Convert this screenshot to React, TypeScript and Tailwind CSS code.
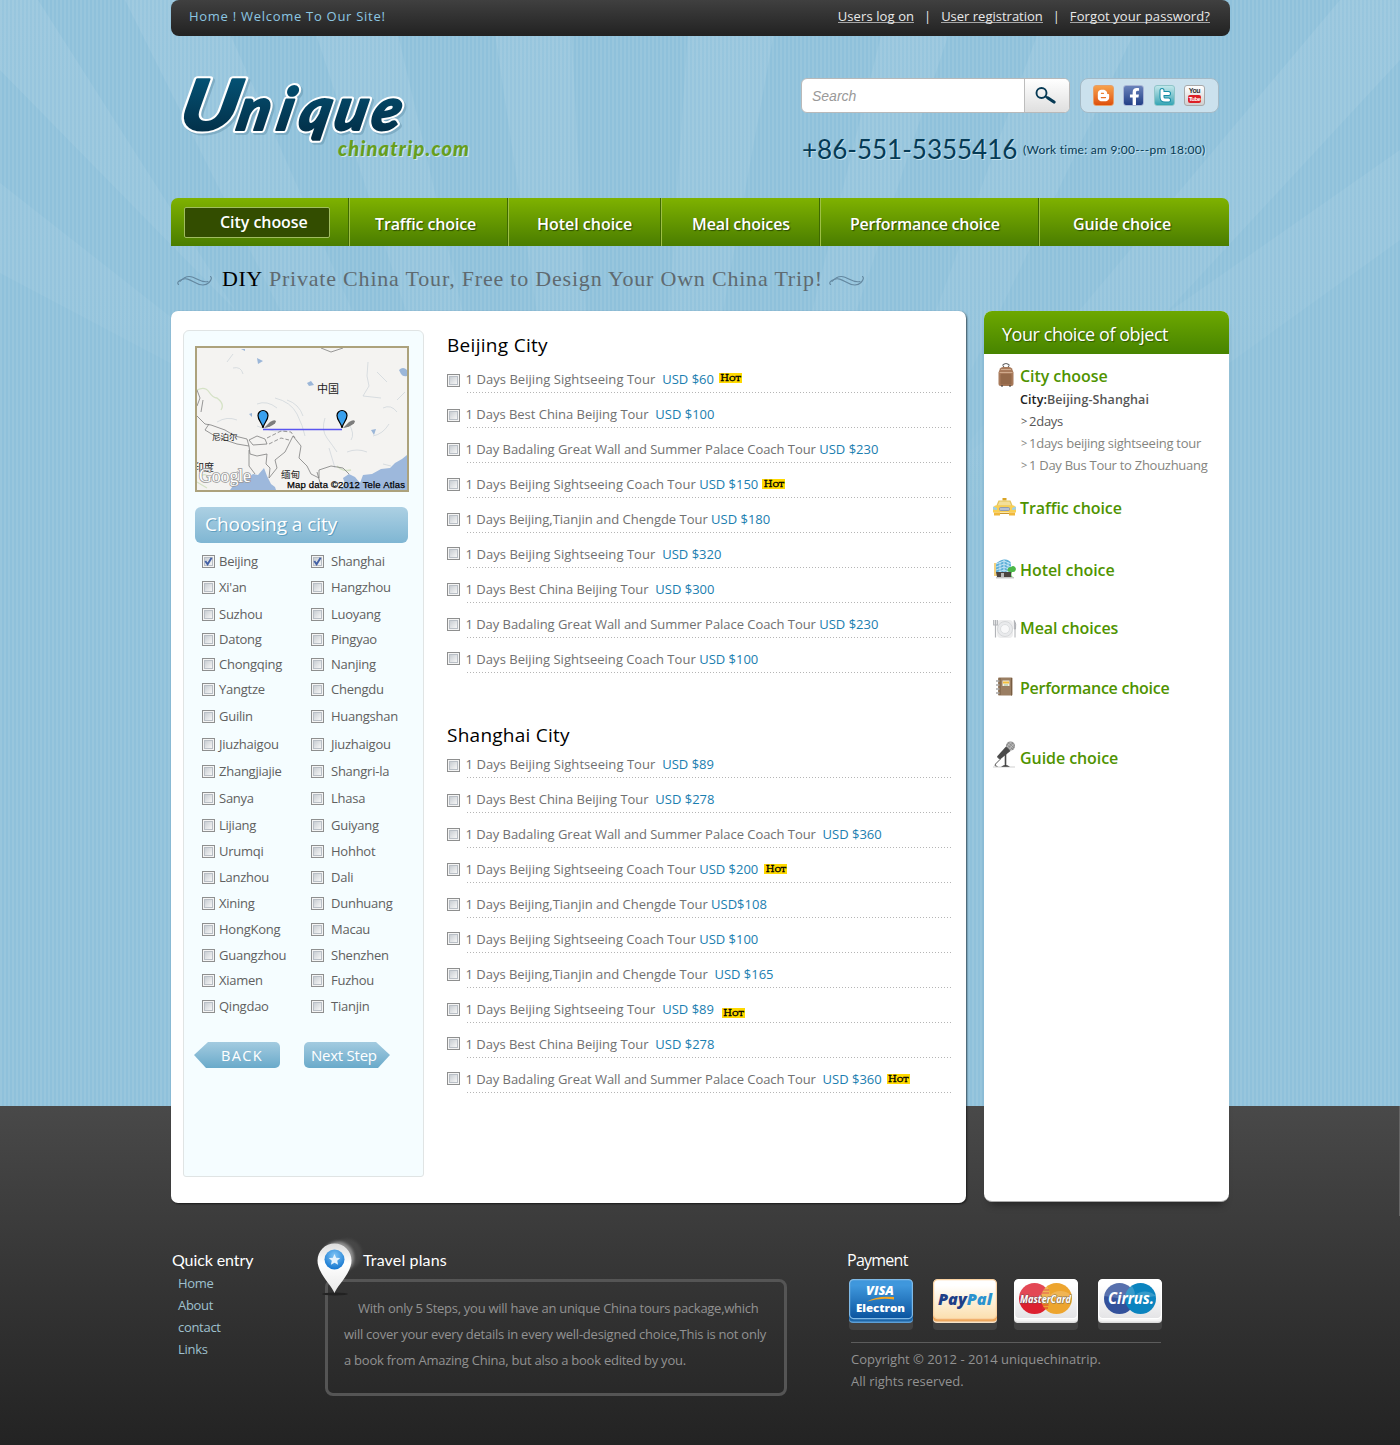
import type { ReactNode } from "react";
import { FaBloggerB, FaFacebookF } from "react-icons/fa";

/* ---------- data ---------- */

type Tour = { name: string; price: string; box: number; hot?: [number, number] };

const beijing: Tour[] = [
  { name: "1 Days Beijing Sightseeing Tour\u00a0\u00a0", price: "USD $60", box: 16, hot: [5, 15] },
  { name: "1 Days Best China Beijing Tour\u00a0\u00a0", price: "USD $100", box: 16 },
  { name: "1 Day Badaling Great Wall and Summer Palace Coach Tour\u00a0", price: "USD $230", box: 15 },
  { name: "1 Days Beijing Sightseeing Coach Tour\u00a0", price: "USD $150", box: 15, hot: [4, 16] },
  { name: "1 Days Beijing,Tianjin and Chengde Tour\u00a0", price: "USD $180", box: 15 },
  { name: "1 Days Beijing Sightseeing Tour\u00a0\u00a0", price: "USD $320", box: 14 },
  { name: "1 Days Best China Beijing Tour\u00a0\u00a0", price: "USD $300", box: 15 },
  { name: "1 Day Badaling Great Wall and Summer Palace Coach Tour\u00a0", price: "USD $230", box: 15 },
  { name: "1 Days Beijing Sightseeing Coach Tour\u00a0", price: "USD $100", box: 14 },
];

const shanghai: Tour[] = [
  { name: "1 Days Beijing Sightseeing Tour\u00a0\u00a0", price: "USD $89", box: 16 },
  { name: "1 Days Best China Beijing Tour\u00a0\u00a0", price: "USD $278", box: 16 },
  { name: "1 Day Badaling Great Wall and Summer Palace Coach Tour\u00a0\u00a0", price: "USD $360", box: 15 },
  { name: "1 Days Beijing Sightseeing Coach Tour\u00a0", price: "USD $200", box: 15, hot: [6, 16] },
  { name: "1 Days Beijing,Tianjin and Chengde Tour\u00a0", price: "USD$108", box: 15 },
  { name: "1 Days Beijing Sightseeing Coach Tour\u00a0", price: "USD $100", box: 14 },
  { name: "1 Days Beijing,Tianjin and Chengde Tour\u00a0\u00a0", price: "USD $165", box: 15 },
  { name: "1 Days Beijing Sightseeing Tour\u00a0\u00a0", price: "USD $89", box: 15, hot: [8, 20] },
  { name: "1 Days Best China Beijing Tour\u00a0\u00a0", price: "USD $278", box: 14 },
  { name: "1 Day Badaling Great Wall and Summer Palace Coach Tour\u00a0\u00a0", price: "USD $360", box: 14, hot: [5, 16] },
];

const cities: [string, string, number][] = [
  ["Beijing", "Shanghai", 26],
  ["Xi'an", "Hangzhou", 27],
  ["Suzhou", "Luoyang", 25],
  ["Datong", "Pingyao", 25],
  ["Chongqing", "Nanjing", 25],
  ["Yangtze", "Chengdu", 27],
  ["Guilin", "Huangshan", 28],
  ["Jiuzhaigou", "Jiuzhaigou", 27],
  ["Zhangjiajie", "Shangri-la", 27],
  ["Sanya", "Lhasa", 27],
  ["Lijiang", "Guiyang", 26],
  ["Urumqi", "Hohhot", 26],
  ["Lanzhou", "Dali", 26],
  ["Xining", "Dunhuang", 26],
  ["HongKong", "Macau", 26],
  ["Guangzhou", "Shenzhen", 25],
  ["Xiamen", "Fuzhou", 26],
  ["Qingdao", "Tianjin", 46],
];

/* ---------- small parts ---------- */

function Check({ on = false }: { on?: boolean }) {
  return (
    <span className="relative block size-[13px] shrink-0 border border-[#8e8f8f] bg-[#f4f4f4] p-px">
      <span className="block size-full border border-[#b9bfc6] bg-linear-to-br from-[#c9ced3] to-[#f6f6f6]" />
      {on && (
        <svg className="absolute inset-0 size-[11px]" viewBox="0 0 11 11" fill="none" stroke="#4360a5" strokeWidth="1.9">
          <path d="M2.3 5 4.6 8.3 8.6 1.8" />
        </svg>
      )}
    </span>
  );
}

function Hot({ at }: { at: [number, number] }) {
  return (
    <span
      className="flex h-[10px] w-[23px] shrink-0 items-end justify-center bg-[#ffd900] font-['DejaVu_Serif',serif] text-black"
      style={{ marginLeft: at[0], marginTop: at[1] }}
    >
      <span className="text-[10px] leading-[11px] [-webkit-text-stroke:0.3px_#000]">H</span>
      <span className="text-[8px] leading-[9px] tracking-[-0.2px] [-webkit-text-stroke:0.4px_#000]">OT</span>
    </span>
  );
}

function tracking(name: string) {
  if (name.includes("Badaling")) return "tracking-[-0.045px]";
  if (name.includes("Sightseeing Coach")) return "tracking-[0.03px]";
  if (name.includes("Sightseeing")) return "tracking-[0.05px]";
  return "tracking-[-0.02px]";
}

function TourList({ items }: { items: Tour[] }) {
  return (
    <div className="relative">
      <div className="pointer-events-none absolute inset-y-0 right-[1px] left-[20px] bg-[repeating-linear-gradient(90deg,#b5b5b5_0_1.5px,transparent_1.5px_3px)] [mask-image:repeating-linear-gradient(180deg,transparent_0_34px,#000_34px_35px)]" />
      <ul>
        {items.map((t, i) => (
          <li key={i} className="flex h-[35px]">
            <span style={{ marginTop: t.box }}>
              <Check />
            </span>
            <div className="ml-[5.5px] flex items-start">
              <span className={`mt-[11px] h-5 whitespace-nowrap leading-5 text-[#707070] ${tracking(t.name)}`}>
                {t.name}
                <span className="tracking-normal text-[#1a7eb0]">{t.price}</span>
              </span>
              {t.hot && <Hot at={t.hot} />}
            </div>
          </li>
        ))}
      </ul>
    </div>
  );
}

function Swirl() {
  return (
    <svg className="h-[11px] w-[35px]" viewBox="0 0 35 11" fill="none" stroke="#6488a0" strokeWidth="1.100" strokeLinecap="round">
      <path d="M1.500 9.500C-.5 7.500 2 5.500 5 4.500 9 2.800 12 4.300 17 7 22 10 28 11.500 32 7.500 34.500 5 35 2.500 33.500 1.500" />
      <path d="M3 6.500C7 2 11 .300 16 2.300 21 4.300 25 8 31 6.500" />
    </svg>
  );
}

function Pin({ x, y }: { x: number; y: number }) {
  return (
    <g transform={`translate(${x} ${y})`}>
      <path d="M1 0 7-6q5-3 6-.5-1 3.500-9 6z" fill="#555" opacity=".75" />
      <path d="M0 0C-.5-5-5-7-5-12.500a5 5 0 0 1 10 0C5-7 .5-5 0 0z" fill="#39a0ee" stroke="#000" strokeWidth="1.200" />
    </g>
  );
}

function MapView() {
  return (
    <svg className="h-[146px] w-[214px] border-2 border-[#aca27c]" viewBox="0 0 210 142">
      <rect width="210" height="142" fill="#f4f3f1" />
      <path d="M210 107 205 111 198 115 193 120 184 121 175 126 166 127 163 135 158 129 152 126 146 130 148 136 143 142H210z" fill="#9db8dc" />
      <path d="M33 142 38 135 50 131 56 126 61 127 67 120 70 128 74 136 78 139 79 142z" fill="#9db8dc" />
      <path d="M202 22q4-4 8 0v6q-4 1-6-2zM60 10l6 3-5 3zM110 35l4-2 3 4-5 1zM52 66l3-1v4zM44 1h4v2zM174 82l5-1-2 6z" fill="#9bb6d8" />
      <path d="M0 42q8-4 12 2t8 6q8 6 4 12M4 128q6-4 8 4M0 134l10 6M140 118q6 6 14 4" stroke="#d5e2c6" strokeWidth="1.300" fill="none" />
      <g fill="none" stroke="#ccd2d8" strokeWidth=".7">
        <path d="M78 50q16 4 22 16t8 22M90 52q12 4 16 16M36 20q8-2 10 6M30 14l6-8M60 56q10-4 20 4" />
        <path d="M166 48 172 38 170 28 171 14M180 24l10 10M166 48l18 2M186 60q8-4 14 4M176 88q10-2 16-12M132 100l6 20M150 104q10-4 20 0M128 70q-4 12 2 20t10 14M200 52l8-8M186 116l8 2" />
        <path d="M20 74q10-6 20-2M60 78q20 8 30 4M152 76q6 10 2 16" />
      </g>
      <g fill="none" stroke="#7f7f7f" strokeWidth=".8">
        <path d="M0 68 8 76 14 77 28 82 38 88 50 91 52 98 40 96 28 92 18 88 8 82 12 76" />
        <path d="M52 92 60 88 68 91 70 96 56 97zM52 98 53 106 60 108 70 106 69 116 73 120 72 130 80 120 78 112 88 104 92 96 96 88 104 98 102 110 110 118 114 126 122 130 122 122 134 118 146 120 152 126" />
        <path d="M0 42 3 50 0 58M6 52 4 64M52 102v16l6 8M124 0l10 4 12-4M120 124l4 14" />
        <path d="M70 90 84 83 94 84 98 90M72 96 84 90 92 92" strokeDasharray="4 2" />
      </g>
      <path d="M66 81.500H145" stroke="#5a55f0" strokeWidth="1.500" />
      <Pin x={66} y={80} />
      <Pin x={145} y={80} />
      <g fontFamily="'Noto Sans CJK SC', sans-serif" fill="#222">
        <text x="120" y="45" fontSize="11">中国</text>
        <text x="15" y="92" fontSize="8.500">尼泊尔</text>
        <text x="84" y="130" fontSize="9.500">缅甸</text>
        <text x="-3" y="123" fontSize="10">印度</text>
      </g>
      <text x="2" y="134" fontSize="18" fontFamily="'Liberation Serif', serif" fill="#fff" stroke="#999" strokeWidth="1.600" paintOrder="stroke" textLength="52">
        Google
      </text>
      <text x="90" y="140" fontSize="9.500" fontFamily="'Liberation Sans', sans-serif" fill="#000" stroke="#000" strokeWidth=".25" textLength="118">
        Map data ©2012 Tele Atlas
      </text>
    </svg>
  );
}

function Logo() {
  const word = (
    <g transform="translate(9 0) skewX(-12)">
      <text x="-1" y="56" fontSize="70" textLength="58" lengthAdjust="spacingAndGlyphs">U</text>
      <text x="57" y="56" fontSize="59">n</text>
      <text x="97" y="56" fontSize="59">i</text>
      <text x="119" y="56" fontSize="59">q</text>
      <text x="154" y="56" fontSize="59">u</text>
      <text x="191" y="56" fontSize="59">e</text>
    </g>
  );
  return (
    <svg className="h-[100px] w-[300px] overflow-visible" viewBox="0 0 300 100">
      <defs>
        <linearGradient id="ink" gradientUnits="userSpaceOnUse" x1="0" y1="5" x2="0" y2="75">
          <stop offset="0" stopColor="#045173" />
          <stop offset="1" stopColor="#02263c" />
        </linearGradient>
      </defs>
      <g fontFamily="Lato, sans-serif" fontWeight="900" fontStyle="italic" strokeLinejoin="round">
        <g fill="#5f8fa8" stroke="#5f8fa8" strokeWidth="6" opacity=".45" transform="translate(2 2)">{word}</g>
        <g fill="#fff" stroke="#fff" strokeWidth="6">{word}</g>
        <g fill="url(#ink)" stroke="url(#ink)" strokeWidth="2">{word}</g>
      </g>
      <g fontFamily="Lato, sans-serif" fontWeight="900" fontStyle="italic" fontSize="20">
        <text x="158" y="83" fill="#cfe6ea" textLength="131">chinatrip.com</text>
        <text x="157" y="82" fill="#679e1c" textLength="131">chinatrip.com</text>
      </g>
    </svg>
  );
}

/* ---------- sidebar icons ---------- */

const Bag = (
  <svg className="h-[25px] w-[16px]" viewBox="0 0 16 25">
    <path d="M5.500 6V4M10.500 6V4M4.500 3.500q3.500-4 7 0" fill="none" stroke="#666" strokeWidth="1.200" />
    <path d="M2 6.500q1-1.500 3-1.500h6q2 0 3 1.500l1.500 4V22q0 2-2 2h-11q-2 0-2-2V10.500z" fill="#a87a5b" />
    <rect x="2.500" y="12" width="11" height="10.500" rx="1" fill="#94694a" />
    <path d="M1.500 10.500h13M3 7.500h10" stroke="#d0aa8c" />
    <path d="M3 24h2M11 24h2" stroke="#333" strokeWidth="1.200" />
  </svg>
);
const Taxi = (
  <svg className="h-[18px] w-[23px]" viewBox="0 0 23 18">
    <rect x="9.500" y="0" width="4" height="2.500" fill="#d9a425" />
    <path d="M5.500 2.500h12l2.500 6H3z" fill="#e3c35c" />
    <path d="M6.500 3.500h10l1.800 4H4.700z" fill="#f3df9a" />
    <path d="M2 7.500h19q2 1 2 4v3H0v-3q0-3 2-4z" fill="#f9cf52" />
    <rect x="6" y="9" width="11" height="4" rx="2" fill="#8f9bb3" />
    <path d="M7 11h9" stroke="#dfe5ee" />
    <path d="M0 8.500l4 1.500v2l-4-.5zM23 8.500l-4 1.500v2l4-.5z" fill="#9fd0e6" />
    <path d="M1 14.500h6v3H1zM16 14.500h6v3h-6z" fill="#f0b83c" />
    <path d="M7 15.500h9" stroke="#c9952c" />
  </svg>
);
const Building = (
  <svg className="h-[20px] w-[22px]" viewBox="0 0 22 20">
    <path d="M0 4h3v13H0z" fill="#f3d27f" />
    <path d="M2 5q3-4 8-4.500T17 4v10H2z" fill="#5fb0d8" />
    <path d="M2 5l8-3 7 3M2 8l8-3 7 3M2 11l8-3 7 3M2 14l8-3 7 3M6 3v11M10 1v13M14 3v11" stroke="#d7eefa" strokeWidth=".8" fill="none" />
    <path d="M2 13h15v5H3z" fill="#4c4440" />
    <path d="M7 14h3v4H7z" fill="#b9b9b9" />
    <path d="M17 18q1-2 0-5-4 0-3.500-2.500T17 8q2-2 4 0Q22.500 9.500 21.500 11.500T18 13q-.5 3 .5 5z" fill="#4cb848" />
    <path d="M2 18.800h18" stroke="#999" strokeWidth=".8" />
  </svg>
);
const Plate = (
  <svg className="h-[20px] w-[24px]" viewBox="0 0 24 20">
    <rect x="4" y="1" width="16" height="18" rx="4" fill="#ededee" />
    <circle cx="12" cy="10" r="7.500" fill="#e9eaec" stroke="#d6d8da" />
    <circle cx="12" cy="10" r="4.500" fill="#f8f8f9" stroke="#dcdee0" />
    <path d="M.7 1v5h3.600V1M2.500 1v17.500" stroke="#b2b4b8" strokeWidth="1.200" fill="none" />
    <path d="M21.300 1.500q2.200 3 1.200 8.500h-1.200zM22 10v8.500" stroke="#aeb0b4" fill="#c5c7ca" />
  </svg>
);
const Book = (
  <svg className="h-[19px] w-[17px]" viewBox="0 0 17 19">
    <rect x="2" y=".5" width="14.500" height="18" rx="1" fill="#9a7e62" />
    <path d="M4 1v17" stroke="#775c42" />
    <rect x="6.500" y="3.500" width="7" height="5.500" fill="#f4efe0" />
    <path d="M7 5.500h6" stroke="#f3bd3a" strokeWidth="2" />
    <path d="M8 8h4" stroke="#9ec0a0" />
    <path d="M0 4h3.500M0 8h3.500M0 12h3.500M0 16h3.500" stroke="#a9a9a9" strokeWidth="1.500" />
    <path d="M15.500 1v17.500" stroke="#775c42" />
  </svg>
);
const Mic = (
  <svg className="h-[27px] w-[23px]" viewBox="0 0 23 27">
    <circle cx="17.500" cy="5" r="4.500" fill="#8c8c8c" />
    <path d="M14.500 2.500l6 5M16.500 1l5 5M14 5l5 4M21 2.500l-5 6M18.500 1l-5 5" stroke="#d5d5d5" strokeWidth=".6" />
    <path d="M13 5.500 17.500 10 7 18.500 4 15.500z" fill="#4a4a4a" />
    <path d="M4.500 16l2.500 2.500L2.500 23q-2 2 2 2.500" stroke="#555" strokeWidth="1" fill="none" />
    <path d="M12.500 13v11" stroke="#4a4a4a" strokeWidth="1.600" />
    <path d="M8 26q2-2 4.500-2t4.500 2z" fill="#333" />
    <path d="M0 26h22" stroke="#bbb" strokeWidth=".7" />
  </svg>
);

function Choice({ icon, pad, lift, title, height, tight, children }: { icon: ReactNode; pad: number; lift: number; title: string; height: number; tight?: boolean; children?: ReactNode }) {
  return (
    <section className="flex" style={{ height }}>
      <div className="w-[36px] shrink-0" style={{ paddingLeft: pad, marginTop: lift }}>
        {icon}
      </div>
      <div className="whitespace-nowrap">
        <h3 className={`text-[16px] leading-[22px] font-semibold text-[#4f9300] ${tight ? "tracking-[-0.25px]" : "tracking-[-0.07px]"}`}>{title}</h3>
        {children}
      </div>
    </section>
  );
}

/* ---------- payment cards ---------- */

function Card({ kind }: { kind: "visa" | "paypal" | "master" | "cirrus" }) {
  const base = { visa: ["#3f97dc", "#0a549f", "#7fb9e6"], paypal: ["#ffffff", "#fbdfae", "#f9d2a2"], master: ["#ffffff", "#e4e4e6", "#ffffff"], cirrus: ["#ffffff", "#e4e4e6", "#ffffff"] }[kind];
  return (
    <svg className="h-[51px] w-[64px]" viewBox="0 0 64 51">
      <defs>
        <linearGradient id={`g-${kind}`} x1="0" y1="0" x2="0" y2="1">
          <stop offset="0.15" stopColor={base[0]} />
          <stop offset="1" stopColor={base[1]} />
        </linearGradient>
      </defs>
      <rect y="12" width="64" height="39" rx="4" fill="#424242" />
      <rect y="10" width="64" height="34" rx="4" fill={kind === "visa" ? "#5d9fd6" : kind === "paypal" ? "#f7e3c8" : "#dcdcdc"} />
      <rect y="2" width="64" height="40.500" rx="4" fill={kind === "visa" ? "#1d66a8" : kind === "paypal" ? "#eda65c" : "#f4f4f4"} />
      <rect x=".6" y=".6" width="62.800" height="39" rx="4" fill={`url(#g-${kind})`} stroke={base[2]} strokeWidth="1.200" />
      {kind === "visa" && (
        <g fontFamily="'Open Sans', sans-serif" fontWeight="800" fill="#fff">
          <text x="17" y="15.500" fontSize="12" fontStyle="italic" textLength="28" lengthAdjust="spacingAndGlyphs">VISA</text>
          <path d="M18 22.500q10-6 27-4.500v2.500q-14-2-27 2z" fill="#f5a623" />
          <text x="7" y="33" fontSize="11" textLength="49" lengthAdjust="spacingAndGlyphs">Electron</text>
        </g>
      )}
      {kind === "paypal" && (
        <text x="5" y="25.500" fontSize="15" fontFamily="'Open Sans', sans-serif" fontWeight="800" fontStyle="italic" textLength="54" lengthAdjust="spacingAndGlyphs" fill="#1e3f88">
          Pay<tspan fill="#2a92cf">Pal</tspan>
        </text>
      )}
      {kind === "master" && (
        <>
          <circle cx="20.500" cy="19.500" r="15.500" fill="#dd2030" />
          <circle cx="42.500" cy="19.500" r="15.500" fill="#eda52f" />
          <path d="M29 11h6M28 14h7M27.500 26h7M28 29h6" stroke="#dd3a28" />
          <path d="M5 17a15.500 15.500 0 0 1 31-1 15.500 15.500 0 0 1 22 1Q32 22 5 17z" fill="#fff" opacity=".18" />
          <text x="6" y="23.500" fontSize="10.500" fontFamily="'Open Sans', sans-serif" fontWeight="700" fontStyle="italic" textLength="51" lengthAdjust="spacingAndGlyphs" fill="#fff" stroke="#555" strokeOpacity=".7" strokeWidth="1.200" paintOrder="stroke">
            MasterCard
          </text>
        </>
      )}
      {kind === "cirrus" && (
        <>
          <circle cx="21.500" cy="19.500" r="15.500" fill="#33519b" />
          <circle cx="42.500" cy="19.500" r="15.500" fill="#0b84bf" />
          <path d="M6 17a15.500 15.500 0 0 1 31-1 15.500 15.500 0 0 1 21 1Q32 22 6 17z" fill="#fff" opacity=".18" />
          <text x="10" y="24.500" fontSize="16" fontFamily="'Open Sans', sans-serif" fontWeight="700" fontStyle="italic" textLength="46" lengthAdjust="spacingAndGlyphs" fill="#fff">
            Cirrus.
          </text>
        </>
      )}
    </svg>
  );
}

function MarkerPin() {
  return (
    <svg className="h-[60px] w-[50px]" viewBox="0 0 50 60">
      <defs>
        <radialGradient id="ball" cx=".5" cy=".3" r=".7">
          <stop offset="0" stopColor="#7fc4f5" />
          <stop offset="1" stopColor="#1476cf" />
        </radialGradient>
        <linearGradient id="shell" x1="0" y1="0" x2="0" y2="1">
          <stop offset="0" stopColor="#dcdcdc" />
          <stop offset=".4" stopColor="#fff" />
          <stop offset="1" stopColor="#e8e8e8" />
        </linearGradient>
        <filter id="soft">
          <feGaussianBlur stdDeviation="1.800" />
        </filter>
      </defs>
      <circle cx="30" cy="17" r="15" fill="#fff" opacity=".07" filter="url(#soft)" />
      <circle cx="21" cy="20.500" r="16" fill="#fff" opacity=".4" filter="url(#soft)" />
      <ellipse cx="18" cy="57" rx="13" ry="1.500" fill="#222" />
      <path d="M17.500 56C15 49 .5 36 .5 23.500a17 17 0 0 1 34 0C34.500 36 20 49 17.500 56z" fill="url(#shell)" />
      <circle cx="17.500" cy="22.500" r="10" fill="url(#ball)" />
      <path d="M17.500 17l1.700 3.700 4 .4-3 2.700.9 4-3.600-2.100-3.600 2.100.9-4-3-2.700 4-.4z" fill="#e6f3fd" />
    </svg>
  );
}

/* ---------- page ---------- */

const nav: { label: string; box: string }[] = [
  { label: "Traffic choice", box: "w-[159px] pl-[25px] tracking-[-0.12px]" },
  { label: "Hotel choice", box: "w-[153px] pl-[28px] tracking-[-0.02px]" },
  { label: "Meal choices", box: "w-[159px] pl-[30px] tracking-[-0.1px]" },
  { label: "Performance choice", box: "w-[219px] pl-[29px] tracking-[-0.24px]" },
  { label: "Guide choice", box: "w-[190px] pl-[33px] tracking-[-0.08px]" },
];

export default function App() {
  return (
    <div className="relative h-[1445px] w-[1400px] overflow-hidden font-['Open_Sans',sans-serif] text-[13px]">
      {/* backdrop */}
      <div className="absolute inset-x-0 top-0 h-[1106px] bg-[repeating-linear-gradient(90deg,#98c6dd_0_2px,#8fc1db_2px_4px)]">
        <svg className="size-full" viewBox="0 0 1400 1106" preserveAspectRatio="none">
          <defs>
            <linearGradient id="beam" gradientUnits="userSpaceOnUse" x1="0" y1="0" x2="0" y2="540">
              <stop offset="0" stopColor="#fff" stopOpacity=".08" />
              <stop offset=".5" stopColor="#fff" stopOpacity=".055" />
              <stop offset="1" stopColor="#fff" stopOpacity="0" />
            </linearGradient>
          </defs>
          <g fill="url(#beam)">
            <path d="M0 0H38L420 600 480 560 0 70z" />
            <path d="M0 183 480 560 430 500 0 273z" />
            <path d="M125 0H215L480 600 420 590z" />
            <path d="M305 0H390L530 600 500 600z" />
            <path d="M490 0H570L600 600 580 600z" />
            <path d="M690 0H780L670 600 650 600z" />
            <path d="M890 0H960L760 600 740 600z" />
            <path d="M1050 0H1150L860 600 830 600z" />
            <path d="M1400 0V60L900 600 870 560 1340 0z" />
            <path d="M1400 150V240L900 600 900 500z" />
          </g>
        </svg>
      </div>
      <div className="absolute inset-x-0 top-[1106px] bottom-0 bg-linear-to-b from-[#494949] to-[#232323]" />
      <div className="absolute top-[1106px] right-0 h-[110px] w-px bg-[#666]" />

      <div className="relative ml-[171px] w-[1059px]">
        {/* top bar */}
        <header className="flex h-9 items-start justify-between rounded-[8px] bg-linear-to-b from-[#404040] to-[#222] pr-[20px] pl-[18px]">
          <span className="mt-[6px] leading-5 tracking-[0.72px] text-[#8cc6e2]">Home ! Welcome To Our Site!</span>
          <div className="mt-[6px] flex leading-5 text-[#e9e9e9]">
            <a className="h-[17px] border-b border-[#a5a5a5] tracking-[0.1px]">Users log on</a>
            <span className="w-[27px] text-center">|</span>
            <a className="h-[17px] border-b border-[#a5a5a5]">User registration</a>
            <span className="w-[27px] text-center">|</span>
            <a className="h-[17px] border-b border-[#a5a5a5] tracking-[0.1px]">Forgot your password?</a>
          </div>
        </header>

        {/* logo + search */}
        <div className="flex h-[162px] justify-between">
          <div className="pt-[38px] pl-[10px]">
            <Logo />
          </div>
          <div className="w-[429px] pt-[42px]">
            <div className="flex items-start">
              <div className="flex h-[35px] w-[269px] overflow-hidden rounded-[6px] border border-[#b9b9b9] bg-white">
                <span className="flex-1 pl-[10px] font-['Liberation_Sans',sans-serif] text-[14px] leading-[35px] text-[#999] italic">Search</span>
                <span className="flex w-[45px] items-center justify-center border-l border-[#bdbdbd] bg-linear-to-b from-white to-[#dfdfdf] pr-[3px]">
                  <svg className="h-[17px] w-[21px]" viewBox="0 0 21 17" fill="none" stroke="#073a55" strokeLinecap="round">
                    <circle cx="6.500" cy="6" r="5" strokeWidth="1.900" />
                    <path d="M10.500 9.500 13 11" strokeWidth="2" />
                    <path d="M13 11 19 15" strokeWidth="3.200" />
                  </svg>
                </span>
              </div>
              <div className="ml-[10px] flex h-[35px] w-[139px] rounded-[8px] border border-[#a5bac6] bg-[#cbe1ed] pt-[6px] pl-[12px]">
                <span className="mr-[9px] flex size-[21px] items-center justify-center rounded-[3px] border border-[#e6a06a] bg-linear-to-b from-[#f6a14a] to-[#de4f08] text-[13px] text-white">
                  <FaBloggerB />
                </span>
                <span className="mr-[10px] flex size-[21px] items-end justify-end rounded-[3px] border border-[#a8b6d6] bg-linear-to-b from-[#6a83ba] to-[#223f87] text-[17px] text-white">
                  <FaFacebookF />
                </span>
                <span className="mr-[9px] flex size-[21px] items-center justify-center rounded-[3px] border border-[#8fc5c9] bg-linear-to-b from-[#bfe7ea] to-[#2fa5b4]">
                  <svg className="size-[15px]" viewBox="0 0 15 15" fill="none" strokeLinecap="round" strokeLinejoin="round">
                    <path d="M5 2.500v6.500q0 3 3 3h3.500M5 5.500h6.500" stroke="#178da6" strokeWidth="5" />
                    <path d="M5 2.500v6.500q0 3 3 3h3.500M5 5.500h6.500" stroke="#fff" strokeWidth="3" />
                  </svg>
                </span>
                <span className="flex size-[21px] flex-col items-center rounded-[3px] border border-[#a9a9a9] bg-linear-to-b from-white to-[#cfcfcf] pt-[1px]">
                  <span className="font-['Liberation_Sans',sans-serif] text-[7px] leading-[8px] font-bold tracking-[-0.4px] text-[#333]">You</span>
                  <span className="h-[8px] w-[13px] rounded-[2px] bg-[#dc1f26] text-center font-['Liberation_Sans',sans-serif] text-[6px] leading-[8px] font-bold tracking-[-0.6px] text-white">Tube</span>
                </span>
              </div>
            </div>
            <div className="mt-[19px] flex items-start font-['Lato',sans-serif] whitespace-nowrap text-[#053a55] [text-shadow:1px_1px_0_#c3dfeb]">
              <span className="w-[222px] pl-px text-[26px] leading-[34px]">+86-551-5355416</span>
              <span className="mt-[9px] text-[12px] leading-[18px] tracking-[0.25px]">(Work time: am 9:00---pm 18:00)</span>
            </div>
          </div>
        </div>

        {/* navigation */}
        <nav className="flex h-12 w-[1058px] overflow-hidden rounded-t-[7px] bg-linear-to-b from-[#7fb200] to-[#4a7d00] text-[16px] font-semibold whitespace-nowrap text-white [text-shadow:1px_1px_1px_#2b4a00]">
          <div className="w-[178px] pt-[9px] pl-[13px]">
            <div className="h-[31px] w-[146px] rounded-[2px] border border-[#a0bd5f] bg-[#334d00] pl-[35px] leading-[28px] tracking-[-0.05px]">City choose</div>
          </div>
          {nav.map((n) => (
            <div key={n.label} className={`${n.box} border-l border-[#9dbf45] leading-[52px] shadow-[-1px_0_0_#3f6a00]`}>
              {n.label}
            </div>
          ))}
        </nav>

        {/* tagline */}
        <div className="flex h-[65px] items-start pl-[6px]">
          <span className="mt-[29px]">
            <Swirl />
          </span>
          <p className="mt-[18px] ml-[10px] w-[607px] font-['Liberation_Serif',serif] text-[22px] leading-[30px] tracking-[0.8px] whitespace-nowrap text-[#5f6a70]">
            <span className="tracking-[0.5px] text-black">DIY</span> Private China Tour, Free to Design Your Own China Trip!
          </p>
          <span className="mt-[29px]">
            <Swirl />
          </span>
        </div>

        {/* content */}
        <div className="flex items-start">
          <main className="flex h-[892px] w-[795px] rounded-[7px] bg-white shadow-[1px_1px_2px_#0009]">
            <aside className="mt-[19px] ml-[12px] h-[847px] w-[241px] rounded-[6px] rounded-b-[3px] border border-[#e0e4e4] bg-[#f5fdff] pt-[15px] pl-[11px]">
              <MapView />
              <h2 className="mt-[15px] h-[36px] w-[213px] rounded-[6px] bg-linear-to-b from-[#acd0e3] to-[#7fb6d3] pl-[10px] text-[19px] leading-[34px] tracking-[-0.05px] text-white [text-shadow:1px_1px_0_#5f9fc0]">
                Choosing a city
              </h2>
              <ul className="pt-[8px] tracking-[-0.25px] text-[#606060]">
                {cities.map(([a, b, h], i) => (
                  <li key={i} className="flex leading-5" style={{ height: h }}>
                    <span className="mt-[4px] ml-[7px]"><Check on={i === 0} /></span>
                    <span className="ml-[4px] w-[92px]">{a}</span>
                    <span className="mt-[4px]"><Check on={i === 0} /></span>
                    <span className="ml-[7px]">{b}</span>
                  </li>
                ))}
              </ul>
              <div className="ml-[-1px] flex gap-[24px] text-[15px] leading-[25px] whitespace-nowrap text-white [text-shadow:1px_1px_1px_#4f91b3]">
                <button className="h-[26px] w-[86px] rounded-r-[5px] bg-linear-to-b from-[#a3cbe0] to-[#69aaca] pt-px pl-[27px] text-left text-[14.5px] tracking-[1.4px] [clip-path:polygon(14px_0,100%_0,100%_100%,12px_100%,0_50%)]">BACK</button>
                <button className="h-[26px] w-[86px] rounded-l-[5px] bg-linear-to-b from-[#a3cbe0] to-[#69aaca] pl-[7px] text-left tracking-[-0.25px] [clip-path:polygon(0_0,72px_0,100%_50%,74px_100%,0_100%)]">Next Step</button>
              </div>
            </aside>
            <div className="mt-[22px] ml-[23px] w-[505px]">
              <h2 className="h-[25px] text-[19px] leading-6 tracking-[0.3px] text-black">Beijing City</h2>
              <TourList items={beijing} />
              <h2 className="mt-[50px] h-[20px] text-[19px] leading-6 tracking-[0.25px] text-black">Shanghai City</h2>
              <TourList items={shanghai} />
            </div>
          </main>

          <aside className="ml-[18px] h-[891px] w-[245px] rounded-[8px] border-b border-[#aaa] bg-white shadow-[0_8px_8px_-6px_#0007]">
            <h2 className="h-[43px] rounded-t-[8px] bg-linear-to-b from-[#6da800] to-[#478400] pl-[18px] text-[18px] leading-[47px] tracking-[-0.45px] text-white [text-shadow:1px_1px_1px_#2f5a00]">
              Your choice of object
            </h2>
            <div className="pt-[11px]">
              <Choice icon={Bag} pad={14} lift={-3} title="City choose" height={132}>
                <div className="mt-[2px] text-[13px] leading-[22px] tracking-[-0.25px] text-[#85857f]">
                  <p className="h-[21px] text-[12.5px] font-semibold tracking-[0.1px] text-[#555]"><span className="text-[#222]">City:</span>Beijing-Shanghai</p>
                  <p className="flex h-[22px] text-[#555]"><span className="w-[9px] pl-px text-[11px]">&gt;</span>2days</p>
                  <p className="flex h-[22px]"><span className="w-[9px] pl-px text-[11px]">&gt;</span>1days beijing sightseeing tour</p>
                  <p className="flex h-[22px] tracking-[-0.28px]"><span className="w-[9px] pl-px text-[11px]">&gt;</span>1 Day Bus Tour to Zhouzhuang</p>
                </div>
              </Choice>
              <Choice icon={Taxi} pad={9} lift={1} title="Traffic choice" height={62} />
              <Choice icon={Building} pad={10} lift={0} title="Hotel choice" height={58} />
              <Choice icon={Plate} pad={9} lift={2} title="Meal choices" height={60} />
              <Choice icon={Book} pad={12} lift={0} title="Performance choice" height={70} tight />
              <Choice icon={Mic} pad={9} lift={-6} title="Guide choice" height={40} />
            </div>
          </aside>
        </div>

        {/* footer */}
        <footer className="flex items-start whitespace-nowrap">
          <div className="mt-[46px] w-[145px] pl-px">
            <h4 className="h-[23px] font-['Lato',sans-serif] text-[16px] leading-[22px] tracking-[-0.1px] text-white">Quick entry</h4>
            <ul className="pl-[6px] leading-[22px] tracking-[-0.3px] text-[#9fc0ce]">
              <li>Home</li>
              <li>About</li>
              <li>contact</li>
              <li>Links</li>
            </ul>
          </div>
          <div className="relative mt-[46px] w-[531px]">
            <h4 className="h-[23px] pl-[47px] font-['Lato',sans-serif] text-[16px] leading-[22px] tracking-[0.15px] text-white">Travel plans</h4>
            <div className="mt-[7px] ml-[9px] h-[117px] w-[462px] rounded-[8px] border-[3px] border-[#555] pt-[13px] pl-[16px] leading-[26px] tracking-[-0.24px] text-[#929292]">
              <p className="pl-[14px] tracking-[-0.27px]">With only 5 Steps, you will have an unique China tours package,which</p>
              <p>will cover your every details in every well-designed choice,This is not only</p>
              <p>a book from Amazing China, but also a book edited by you.</p>
            </div>
            <span className="absolute top-[-12px] left-px">
              <MarkerPin />
            </span>
          </div>
          <div className="mt-[46px] text-[#929292]">
            <h4 className="text-[16px] leading-[22px] tracking-[-0.75px] text-white">Payment</h4>
            <div className="mt-[8px] ml-[2px] flex">
              <Card kind="visa" />
              <span className="w-5" />
              <Card kind="paypal" />
              <span className="w-[17px]" />
              <Card kind="master" />
              <span className="w-5" />
              <Card kind="cirrus" />
            </div>
            <div className="mt-[12px] ml-[4px] w-[310px] border-t border-[#5c5c5c] pt-[5px] leading-[22px]">
              <p>Copyright © 2012 - 2014 uniquechinatrip.</p>
              <p>All rights reserved.</p>
            </div>
          </div>
        </footer>
      </div>
    </div>
  );
}
